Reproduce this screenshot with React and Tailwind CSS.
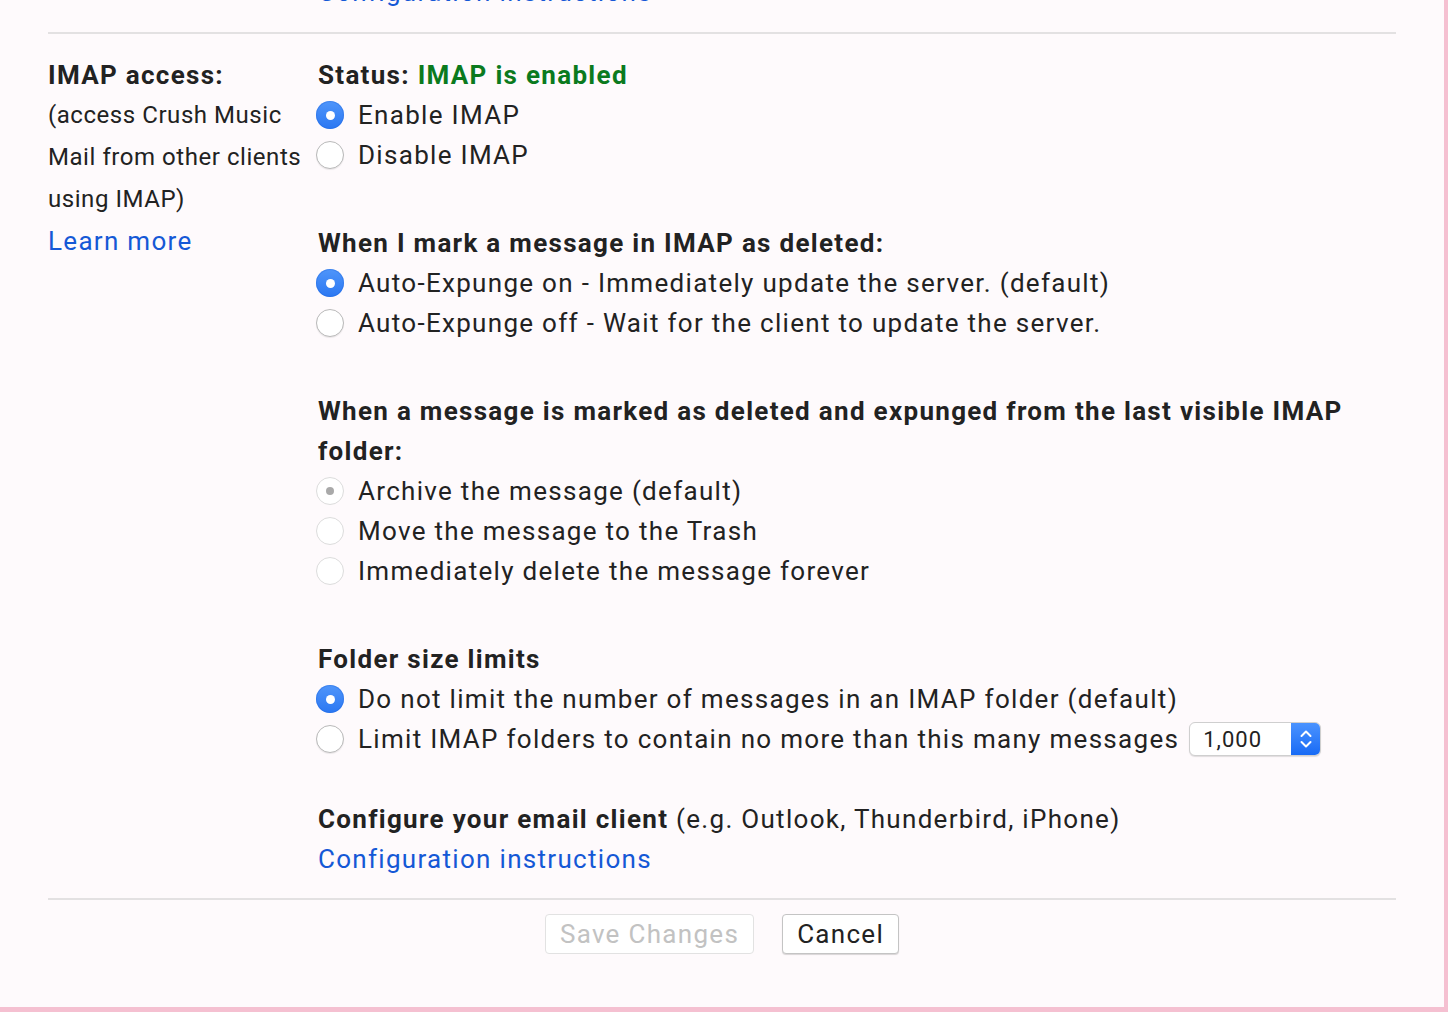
import React from 'react';

// ラジオボタン（macOS風）
const Radio = ({ checked, disabled }) => {
  if (checked && !disabled) {
    return (
      <span className="flex h-[28px] w-[28px] shrink-0 items-center justify-center rounded-full bg-gradient-to-b from-[#4f95fa] to-[#2a77f2] shadow-[inset_0_0_0_1px_rgba(30,100,220,0.35)]">
        <span className="h-[9px] w-[9px] rounded-full bg-white" />
      </span>
    );
  }
  if (disabled) {
    return (
      <span className="flex h-[28px] w-[28px] shrink-0 items-center justify-center rounded-full border border-[#dcdcdc] bg-white">
        {checked && <span className="h-[8px] w-[8px] rounded-full bg-[#a9a9a9]" />}
      </span>
    );
  }
  return (
    <span className="h-[28px] w-[28px] shrink-0 rounded-full border border-[#b9b9b9] bg-white shadow-[0_1px_1px_rgba(0,0,0,0.08)]" />
  );
};

const Option = ({ checked, disabled, children }) => (
  <label className="flex h-[40px] items-center gap-[14px] -ml-[2px]">
    <Radio checked={checked} disabled={disabled} />
    <span className="flex items-center">{children}</span>
  </label>
);

const Heading = ({ children, className = '' }) => (
  <div className={`font-bold leading-[40px] ${className}`}>{children}</div>
);

// 件数セレクト
const CountSelect = () => (
  <span className="ml-[10px] flex h-[34px] w-[132px] overflow-hidden rounded-[6px] border border-[#cfcfcf] bg-white tracking-[1px] shadow-[0_1px_1px_rgba(0,0,0,0.12)]">
    <span className="flex flex-1 items-center pl-[13px] text-[22px] text-[#222]">1,000</span>
    <span className="flex w-[29px] items-center justify-center bg-gradient-to-b from-[#4a93ff] to-[#176af5]">
      <svg width="14" height="22" viewBox="0 0 14 22" fill="none" stroke="white" strokeWidth="2" strokeLinecap="round" strokeLinejoin="round">
        <path d="M2.5 8 L7 3.5 L11.5 8" />
        <path d="M2.5 14 L7 18.5 L11.5 14" />
      </svg>
    </span>
  </span>
);

const App = () => {
  return (
    <div className="h-[1012px] w-full overflow-hidden bg-[#f5c0d1]">
      <div
        className="h-[1007px] w-[1444px] overflow-hidden bg-[#fefafc] text-[26px] tracking-[1.3px] text-[#222]"
        style={{ fontFamily: 'Roboto, "Noto Sans", sans-serif' }}
      >
        <div className="pl-[48px] w-[1396px]">
          {/* 前のセクションの末尾 */}
          <div className="-mt-[28px] pl-[270px] pb-[20px] leading-[40px]">
            <a className="text-[#1558d6]">Configuration instructions</a>
          </div>

          <div className="flex border-t-2 border-[#e3e1e2] pt-[21px]">
            {/* 左カラム */}
            <div className="w-[270px] shrink-0">
              <Heading>IMAP access:</Heading>
              <div className="-mt-[1px] leading-[42px] text-[24px] tracking-[0.55px]">
                (access Crush Music<br />
                Mail from other clients<br />
                using IMAP)
              </div>
              <a className="block leading-[42px] text-[#1558d6]">Learn more</a>
            </div>

            {/* 右カラム */}
            <div className="flex-1">
              <Heading>
                Status: <span className="text-[#0b7a1e]">IMAP is enabled</span>
              </Heading>
              <Option checked>Enable IMAP</Option>
              <Option>Disable IMAP</Option>

              <Heading className="mt-[48px]">When I mark a message in IMAP as deleted:</Heading>
              <Option checked>Auto-Expunge on - Immediately update the server. (default)</Option>
              <Option>Auto-Expunge off - Wait for the client to update the server.</Option>

              <Heading className="mt-[48px]">
                When a message is marked as deleted and expunged from the last visible IMAP folder:
              </Heading>
              <Option checked disabled>Archive the message (default)</Option>
              <Option disabled>Move the message to the Trash</Option>
              <Option disabled>Immediately delete the message forever</Option>

              <Heading className="mt-[48px]">Folder size limits</Heading>
              <Option checked>Do not limit the number of messages in an IMAP folder (default)</Option>
              <Option>
                Limit IMAP folders to contain no more than this many messages
                <CountSelect />
              </Option>

              <div className="mt-[40px] leading-[40px]">
                <span className="font-bold">Configure your email client</span> (e.g. Outlook, Thunderbird, iPhone)
              </div>
              <a className="block leading-[40px] text-[#1558d6]">Configuration instructions</a>
            </div>
          </div>

          {/* ボタン */}
          <div className="mt-[19px] flex justify-center gap-[28px] border-t-2 border-[#e3e1e2] pt-[14px]">
            <button className="h-[40px] rounded-[4px] border border-[#e2e2e2] bg-white px-[14px] text-[26px] text-[#c2c2c2]">
              Save Changes
            </button>
            <button className="h-[40px] rounded-[4px] border border-[#c4c4c4] bg-white px-[14px] text-[26px] text-[#222] shadow-[0_1px_1px_rgba(0,0,0,0.15)]">
              Cancel
            </button>
          </div>
        </div>
      </div>
    </div>
  );
};

export default App;
